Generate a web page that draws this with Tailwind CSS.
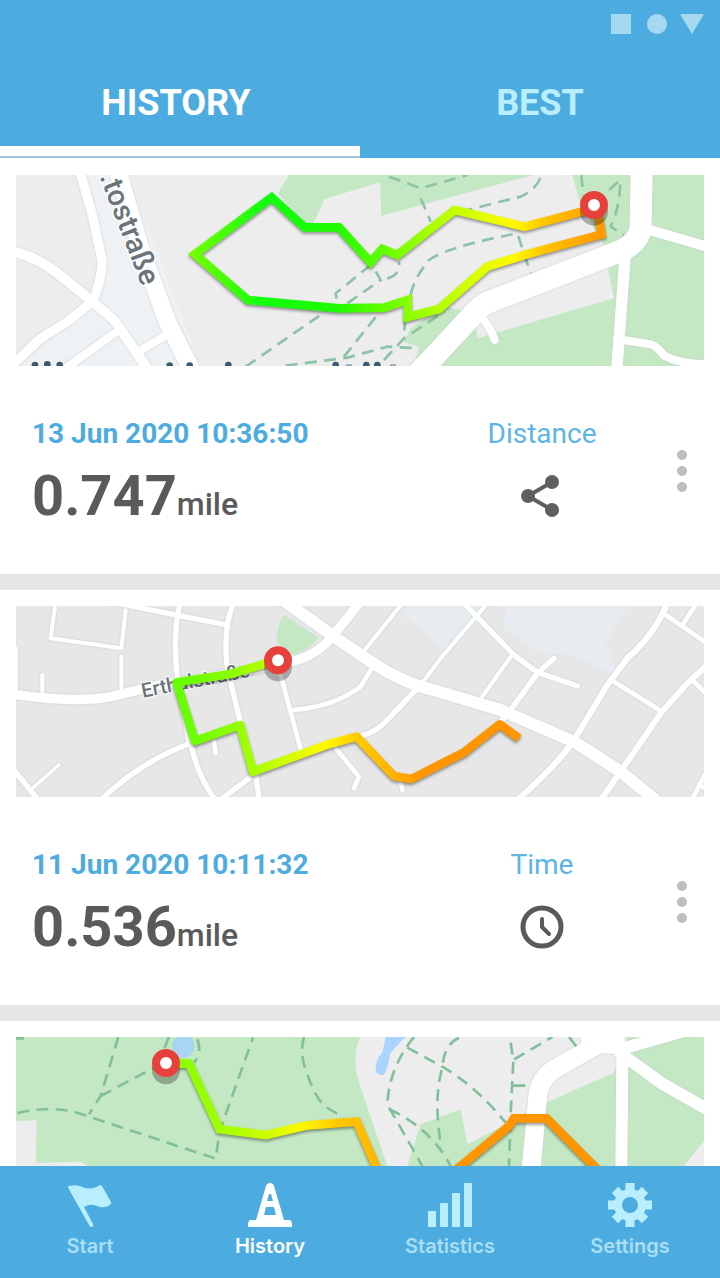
<!DOCTYPE html>
<html lang="en">
<head>
    <meta charset="UTF-8">
    <meta name="viewport" content="width=device-width, initial-scale=1.0">
    <title>Run Tracker - History</title>

    <!-- Tailwind CSS -->
    <script src="https://cdn.jsdelivr.net/npm/@tailwindcss/browser@4"></script>
</head>
<body class="h-screen flex flex-col bg-white font-['Roboto',sans-serif] text-[#5a5a5a]">

    <!-- Header -->
    <header class="shrink-0 bg-[#4dacdf]">
        <div class="h-[47px] px-4 flex items-center justify-end gap-3 text-[#a6d8f0]">
            <svg class="w-6 h-[22px]" viewBox="0 0 24 22" fill="currentColor"><rect x="1" y="1" width="20" height="20"/></svg>
            <svg class="w-[22px] h-[22px]" viewBox="0 0 22 22" fill="currentColor"><circle cx="11" cy="11" r="10"/></svg>
            <svg class="w-6 h-[22px]" viewBox="0 0 24 22" fill="currentColor"><path d="M0 1h24L12 21z"/></svg>
        </div>
        <div class="grid grid-cols-2 h-[111px]" role="tablist">
            <button type="button" role="tab" aria-selected="true" class="pr-2 text-4xl font-bold text-white shadow-[inset_0_-2px_#9fc4d8,inset_0_-12px_#ffffff]">HISTORY</button>
            <button type="button" role="tab" aria-selected="false" class="text-4xl font-bold text-[#b9eeff]">BEST</button>
        </div>
    </header>

    <!-- Run list -->
    <main class="flex-1 min-h-0 overflow-y-auto [scrollbar-width:none]">

        <!-- Run 1 -->
        <article class="px-4 pt-[17px] border-b-16 border-[#e6e6e6]">
            <svg class="block w-full" viewBox="46 30 2064 573" role="img" aria-label="Route map">
                <defs>
                    <linearGradient id="route1" gradientUnits="userSpaceOnUse" x1="583" y1="0" x2="1800" y2="0">
                        <stop offset="0" stop-color="#70ff00"/>
                        <stop offset=".17" stop-color="#10ff10"/>
                        <stop offset=".35" stop-color="#20fa00"/>
                        <stop offset=".46" stop-color="#60ff00"/>
                        <stop offset=".58" stop-color="#a8ff00"/>
                        <stop offset=".69" stop-color="#d8ff00"/>
                        <stop offset=".79" stop-color="#fff800"/>
                        <stop offset=".86" stop-color="#ffc400"/>
                        <stop offset="1" stop-color="#ff9a00"/>
                    </linearGradient>
                </defs>
                <rect x="46" y="30" width="2064" height="573" fill="#ededed"/>
                <path fill="#eef2f4" d="M245 30H380L600 603H60L280 410L310 290Z"/>
                <!-- parks -->
                <g fill="#c4e8c4">
                    <path d="M865 30L832 85L912 175H938L972 102L1138 52L1142 152L1560 40L1600 30Z"/>
                    <path d="M1715 30H1900V250L1810 240L1740 120Z"/>
                    <path d="M1930 30H2110V603H1850L1870 240Z"/>
                    <path d="M1270 603L1425 470L1430 520L1840 400L1820 303L1880 260L1860 603Z"/>
                    <path d="M1210 530L1230 490L1330 425L1410 440L1240 600L1255 545Z"/>
                </g>
                <!-- roads -->
                <g fill="none" stroke="#fff" stroke-linejoin="round" class="drop-shadow-[0_0_3px_#c8ccce]">
                    <path stroke-width="28" d="M235 10L275 150L305 290Q300 360 275 410L200 470L120 520L40 595"/>
                    <path stroke-width="30" d="M40 260Q120 280 190 340L275 410L340 465L440 610"/>
                    <path stroke-width="24" d="M355 495L195 610M420 556L500 508"/>
                    <path stroke-width="52" d="M352 20L420 250L500 470L580 630"/>
                    <path stroke-width="66" d="M1230 650L1430 435Q1450 415 1480 405L1860 258Q1920 230 1920 180L1923 10"/>
                    <path stroke-width="34" d="M1875 250L1848 620"/>
                    <path stroke-width="30" d="M1930 190L2120 245"/>
                    <path stroke-width="24" d="M1870 525L1950 538Q1970 545 1990 572Q2040 598 2120 598"/>
                    <path stroke-width="24" stroke-linecap="round" d="M1430 445Q1465 475 1482 525"/>
                </g>
                <!-- footpaths -->
                <g fill="none" stroke="#8dc3a6" stroke-width="8" stroke-dasharray="36 22">
                    <path d="M735 605L1010 415L1005 385L1110 300"/>
                    <path d="M855 602L1040 578L1160 545L1255 550"/>
                    <path d="M1030 575L1090 500L1130 450"/>
                    <path d="M1040 415L1140 345L1120 310M1160 340Q1200 330 1195 290"/>
                    <path d="M1150 585L1210 520L1330 440M1213 460L1210 520"/>
                    <path d="M1230 390Q1240 340 1285 285Q1340 245 1550 205L1590 325"/>
                    <path d="M1165 35L1260 70L1400 30M1260 100L1290 170"/>
                    <path d="M1380 140L1560 95Q1610 70 1620 35"/>
                    <path d="M1742 30L1748 90M1825 75L1858 45Q1860 120 1830 185L1870 210"/>
                </g>
                <text transform="translate(424 366) rotate(69)" text-anchor="end" font-size="88" font-weight="500" fill="#6a747a" stroke="#fff" stroke-width="8" paint-order="stroke">.tostraße</text>
                <g fill="#3c5a6e">
                    <circle cx="103" cy="600" r="10"/>
                    <circle cx="140" cy="598" r="10"/>
                    <circle cx="177" cy="600" r="10"/>
                    <circle cx="507" cy="602" r="10"/>
                    <circle cx="567" cy="602" r="10"/>
                    <circle cx="683" cy="600" r="10"/>
                    <circle cx="1005" cy="600" r="10"/>
                    <circle cx="1097" cy="600" r="10"/>
                    <circle cx="1130" cy="600" r="10"/>
                    <path fill="#8fa6b8" d="M1036 598h18v6h-18zM1168 598h18v6h-18z"/>
                </g>
                <path class="drop-shadow-[0_6px_4px_#00000066]" fill="none" stroke="url(#route1)" stroke-width="26" d="M1780 130L1572 185L1362 135L1190 270L1145 252L1110 292L1015 187H912L813 97L583 268L742 405L1015 430L1150 428L1221 405V456L1315 432L1460 305L1570 270L1803 208L1790 130"/>
                <circle cx="1780" cy="140" r="42" fill="#000" fill-opacity=".28"/>
                <circle cx="1780" cy="120" r="30" fill="#fff" stroke="#e8413c" stroke-width="24"/>
            </svg>
            <div class="grid grid-cols-[1fr_236px_44px] items-center pt-13 pb-[50px]">
                <div class="pl-4 flex flex-col gap-[18px]">
                    <time datetime="2020-06-13T10:36:50" class="text-[28px] leading-8 font-bold text-[#4dacdf]">13 Jun 2020 10:36:50</time>
                    <p class="text-[56px] leading-14 font-bold">0.747<span class="text-[32px] leading-8 font-medium">mile</span></p>
                </div>
                <div class="flex flex-col items-center gap-[18px]">
                    <span class="text-[28px] leading-8 text-[#5cb5e4]">Distance</span>
                    <button type="button" aria-label="Share" class="h-14 flex items-center">
                        <svg class="w-11 h-11" viewBox="0 0 44 44" fill="#5f5f5f" stroke="#5f5f5f" stroke-width="4">
                            <path fill="none" d="M32 8L8 22L32 36"/>
                            <g stroke="none"><circle cx="32" cy="8" r="7"/><circle cx="8" cy="22" r="7"/><circle cx="32" cy="36" r="7"/></g>
                        </svg>
                    </button>
                </div>
                <button type="button" aria-label="More" class="flex justify-center">
                    <svg class="w-3 h-11" viewBox="0 0 12 44" fill="#bdbdbd"><circle cx="6" cy="6" r="5"/><circle cx="6" cy="22" r="5"/><circle cx="6" cy="38" r="5"/></svg>
                </button>
            </div>
        </article>

        <!-- Run 2 -->
        <article class="px-4 pt-4 border-b-16 border-[#e6e6e6]">
            <svg class="block w-full" viewBox="46 33 2064 573" role="img" aria-label="Route map">
                <defs>
                    <linearGradient id="route2" gradientUnits="userSpaceOnUse" x1="528" y1="0" x2="1260" y2="0">
                        <stop offset="0" stop-color="#66ff00"/>
                        <stop offset=".08" stop-color="#6cff00"/>
                        <stop offset=".27" stop-color="#98ff00"/>
                        <stop offset=".42" stop-color="#c8ff00"/>
                        <stop offset=".61" stop-color="#fff800"/>
                        <stop offset=".74" stop-color="#ffca00"/>
                        <stop offset=".88" stop-color="#ffb400"/>
                        <stop offset="1" stop-color="#ff9500"/>
                    </linearGradient>
                </defs>
                <rect x="46" y="33" width="2064" height="573" fill="#e7e7e7"/>
                <g fill="#e6ecf0">
                    <path d="M1210 60L1240 33H1450L1400 90L1330 165Z"/>
                    <path d="M1510 100L1520 33H1880L1815 140L1850 240L1700 175H1620Z"/>
                </g>
                <!-- roads -->
                <g fill="none" stroke="#fff" stroke-linejoin="round" stroke-linecap="round" stroke-width="16" class="drop-shadow-[0_0_3px_#c8ccce]">
                    <path stroke-width="12" d="M165 20L150 130L362 160L375 45M362 185V285M125 240V290M46 160V290"/>
                    <path d="M330 20L535 62L680 90M540 20Q515 100 530 250L565 440M700 20Q665 100 680 220L720 385"/>
                    <path stroke-width="14" d="M840 240L902 470M880 345Q1000 335 1080 275L1110 225M640 440L645 475M1005 460L1075 545L1060 580M1200 560L1205 585"/>
                    <path d="M300 615Q420 500 570 445Q590 540 640 610M665 610L765 535L775 610M40 525L110 612"/>
                    <path stroke-width="10" d="M95 580L175 510"/>
                    <path stroke-width="12" d="M1205 25L1080 180M1460 25L1320 190L1260 270M1530 185L1445 305"/>
                    <path d="M1250 280L1160 375Q1130 410 1075 425M1390 25L1540 180L1610 232L1730 273M1660 190L1610 235L1530 345L1500 380"/>
                    <path stroke-width="18" d="M2000 25Q1960 120 1880 190L1820 270L1720 435Q1670 510 1550 615"/>
                    <path stroke-width="14" d="M1995 60L2115 142M2085 30L2045 90M1840 260L1985 350M2080 260L2115 295M2115 535L2075 612M2095 570L2115 580"/>
                    <path stroke-width="18" d="M2120 210L2060 265L1980 355L1860 530L1800 615"/>
                    <path stroke-width="28" d="M40 298Q230 325 330 305Q430 280 520 262L700 235L850 205Q940 190 990 130L1080 20"/>
                    <path stroke-width="36" d="M840 10L1000 125L1110 200Q1200 260 1280 280L1500 345L1720 440L1860 530L1970 620"/>
                </g>
                <path fill="#c4e8c4" d="M850 60L955 128Q920 170 868 180L828 140Q828 90 850 60Z"/>
                <text transform="translate(426 308) rotate(-11)" font-size="60" font-weight="500" fill="#6a747a" stroke="#fff" stroke-width="6" paint-order="stroke">Erthalstraße</text>
                <path class="drop-shadow-[0_6px_4px_#00000066]" fill="none" stroke="url(#route2)" stroke-width="26" stroke-linejoin="round" d="M830 195L690 237L528 262L583 438L718 390L757 530L985 447L1068 425L1180 543L1232 552L1390 472L1497 388L1555 430"/>
                <circle cx="832" cy="217" r="42" fill="#000" fill-opacity=".28"/>
                <circle cx="832" cy="196" r="30" fill="#fff" stroke="#e8413c" stroke-width="24"/>
            </svg>
            <div class="grid grid-cols-[1fr_236px_44px] items-center pt-13 pb-[50px]">
                <div class="pl-4 flex flex-col gap-[18px]">
                    <time datetime="2020-06-11T10:11:32" class="text-[28px] leading-8 font-bold text-[#4dacdf]">11 Jun 2020 10:11:32</time>
                    <p class="text-[56px] leading-14 font-bold">0.536<span class="text-[32px] leading-8 font-medium">mile</span></p>
                </div>
                <div class="flex flex-col items-center gap-[18px]">
                    <span class="text-[28px] leading-8 text-[#5cb5e4]">Time</span>
                    <button type="button" aria-label="Time" class="h-14 flex items-center">
                        <svg class="w-11 h-11" viewBox="0 0 44 44" fill="none" stroke="#5a5a5a">
                            <circle cx="22" cy="22" r="19" stroke-width="5"/>
                            <path stroke-width="4" stroke-linecap="round" stroke-linejoin="round" d="M22 14V22L29 29"/>
                        </svg>
                    </button>
                </div>
                <button type="button" aria-label="More" class="flex justify-center">
                    <svg class="w-3 h-11" viewBox="0 0 12 44" fill="#bdbdbd"><circle cx="6" cy="6" r="5"/><circle cx="6" cy="22" r="5"/><circle cx="6" cy="38" r="5"/></svg>
                </button>
            </div>
        </article>

        <!-- Run 3 -->
        <article class="px-4 pt-4">
            <svg class="block w-full" viewBox="46 38 2064 573" role="img" aria-label="Route map">
                <defs>
                    <linearGradient id="route3" gradientUnits="userSpaceOnUse" x1="495" y1="0" x2="1350" y2="0">
                        <stop offset="0" stop-color="#80ff00"/>
                        <stop offset=".19" stop-color="#a0ff00"/>
                        <stop offset=".35" stop-color="#ccff00"/>
                        <stop offset=".48" stop-color="#fff800"/>
                        <stop offset=".6" stop-color="#ffc800"/>
                        <stop offset=".76" stop-color="#ffb400"/>
                        <stop offset="1" stop-color="#ff9500"/>
                    </linearGradient>
                </defs>
                <rect x="46" y="38" width="2064" height="573" fill="#c4e8c4"/>
                <g fill="#ededed">
                    <path d="M1078 38Q1050 110 1080 190L1165 440H1215L1260 300L1380 255L1400 360L1525 295L1600 250L1840 145L1880 38Z"/>
                    <path d="M46 290L108 288L105 415L240 412L270 430H46Z"/>
                    <path d="M2045 430L2110 350V430Z"/>
                </g>
                <path fill="#a8d4ff" d="M1155 38H1215Q1175 75 1168 90Q1158 150 1145 152Q1122 150 1125 130Q1128 100 1145 85Z"/>
                <circle cx="548" cy="66" r="34" fill="#a9d5f3"/>
                <!-- roads -->
                <g fill="none" stroke="#fff" stroke-linejoin="round" class="drop-shadow-[0_0_3px_#c8ccce]">
                    <path stroke-width="56" d="M1810 50L1660 135Q1612 170 1611 220L1590 450"/>
                    <path stroke-width="36" d="M1840 80L2120 0M1850 80L1980 175L2120 255M1865 90L1862 450"/>
                    <path fill="#fff" stroke="none" d="M1740 38H1870L1890 110L1845 90Q1800 80 1750 100Z"/>
                </g>
                <!-- footpaths -->
                <g fill="none" stroke="#82c09c" stroke-width="8" stroke-dasharray="36 22">
                    <path d="M353 38L300 215L265 270M300 215L460 130M505 38L490 75M590 45Q605 85 580 115"/>
                    <path d="M50 266Q140 245 220 262L645 403L657 320L757 40"/>
                    <path d="M910 38Q895 90 920 150Q940 210 970 245L1030 280M46 42H70"/>
                    <path d="M1240 38Q1165 130 1160 240L1265 425M1220 70L1330 130Q1430 190 1515 295"/>
                    <path d="M1375 40Q1330 60 1325 130Q1305 200 1312 290L1320 370M1165 255Q1290 310 1350 425"/>
                    <path d="M1530 55L1538 110L1530 270L1525 425M1540 105L1655 38M1538 184H1580M1705 38L1730 70"/>
                </g>
                <path class="drop-shadow-[0_6px_4px_#00000066]" fill="none" stroke="url(#route3)" stroke-width="26" d="M495 118H565L657 315L795 332L920 303L1068 292L1150 480L1240 530L1380 425L1525 305L1540 282H1638L1800 445"/>
                <circle cx="496" cy="138" r="42" fill="#000" fill-opacity=".28"/>
                <circle cx="496" cy="116" r="30" fill="#fff" stroke="#e8413c" stroke-width="24"/>
            </svg>
        </article>
    </main>

    <!-- Bottom navigation -->
    <nav class="shrink-0 grid grid-cols-4 pt-[17px] pb-5 bg-[#4dacdf] font-['Inter',sans-serif] text-xl leading-6 font-semibold text-[#a9def5]">
        <a href="#start" class="flex flex-col items-center gap-[7px]">
            <svg class="w-11 h-11" viewBox="0 0 44 44" fill="#b9eeff">
                <path d="M0 4Q0 2 2 3Q9 1 17 5Q24 7 32 2L34 3L43 19Q44 21 42 22Q36 26 29 23Q22 20 16 24L25 41Q26 44 23 44Q22 44 21 42L2 8Z"/>
            </svg>
            Start
        </a>
        <a href="#history" aria-current="page" class="flex flex-col items-center gap-[7px] text-white">
            <svg class="w-11 h-11" viewBox="0 0 44 44" fill="#fff">
                <path fill-rule="evenodd" d="M22 0Q25 0 26 3L36 37H42Q44 38 44 41V44H0V41Q0 38 2 37H8L18 3Q19 0 22 0ZM21 11L19 18H25L23 11ZM18 24L16 32H28L26 24Z"/>
            </svg>
            History
        </a>
        <a href="#statistics" class="flex flex-col items-center gap-[7px]">
            <svg class="w-11 h-11" viewBox="0 0 44 44" fill="#b9eeff">
                <rect x="0" y="28" width="8" height="16" rx="1"/>
                <rect x="12" y="20" width="8" height="24" rx="1"/>
                <rect x="24" y="10" width="8" height="34" rx="1"/>
                <rect x="36" y="0" width="8" height="44" rx="1"/>
            </svg>
            Statistics
        </a>
        <a href="#settings" class="flex flex-col items-center gap-[7px]">
            <svg class="w-11 h-11" viewBox="0 0 44 44" fill="none" stroke="#b9eeff">
                <circle cx="22" cy="22" r="12" stroke-width="8"/>
                <path stroke-width="9" stroke-linejoin="round" d="M22 0V10M22 34V44M0 22H10M34 22H44M7 7L13 13M31 31L37 37M37 7L31 13M13 31L7 37"/>
            </svg>
            Settings
        </a>
    </nav>
</body>
</html>
